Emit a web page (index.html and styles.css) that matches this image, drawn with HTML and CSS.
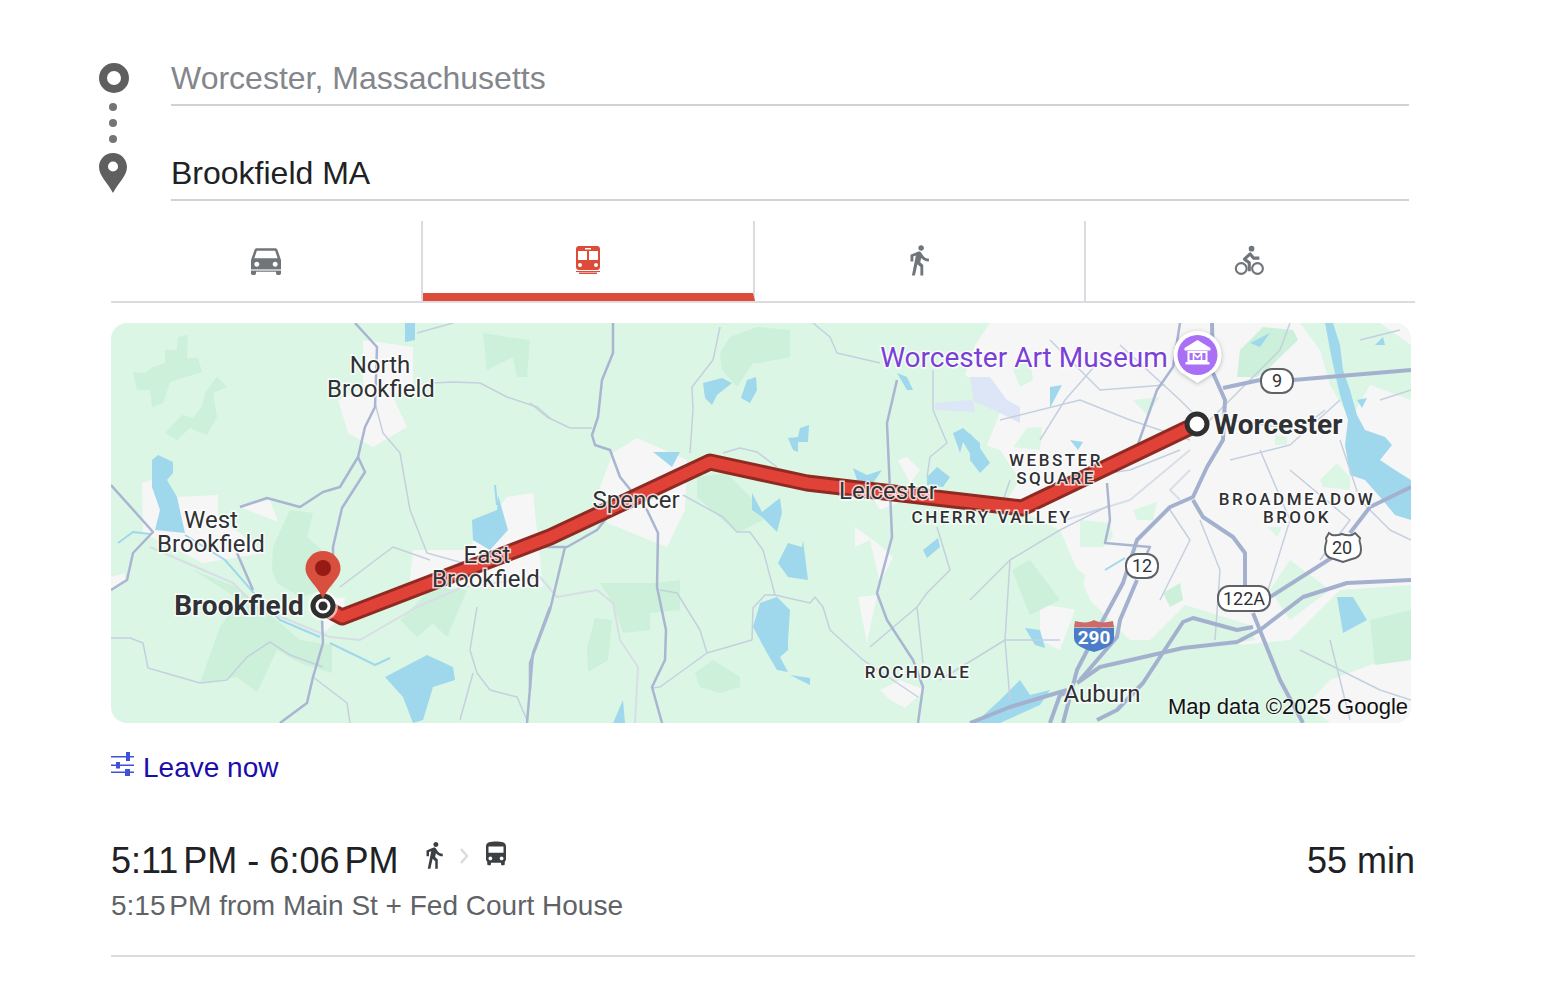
FILE: index.html
```html
<!DOCTYPE html>
<html lang="en">
<head>
	<meta charset="UTF-8" />
	<title>Directions</title>
	<link rel="stylesheet" href="styles.css">
</head>
<body>
	<div class="directions">
		<!-- Origin and destination -->
		<div class="endpoints">
			<div class="endpoint-icons">
				<svg class="icon-origin" viewBox="0 0 30 30"><circle cx="15" cy="15" r="11" fill="none" stroke="#5f5f5f" stroke-width="8"/></svg>
				<span class="hop-dot"></span>
				<span class="hop-dot"></span>
				<span class="hop-dot"></span>
				<svg class="icon-dest" viewBox="0 0 28 40"><path fill="#5f5f5f" d="M14 0C6.3 0 0 6.2 0 14c0 9 9 16 14 26 5-10 14-17 14-26C28 6.2 21.700 0 14 0z"/><circle cx="14" cy="13.500" r="5" fill="#fff"/></svg>
			</div>
			<div class="endpoint-fields">
				<div class="field field-from">Worcester, Massachusetts</div>
				<div class="field field-to">Brookfield MA</div>
			</div>
		</div>

		<!-- Travel modes -->
		<div class="modes">
			<div class="mode">
				<svg class="mode-icon mode-icon-car" viewBox="0 0 24 24"><path fill="#70757a" d="M18.920 6.010C18.720 5.420 18.160 5 17.500 5h-11c-.66 0-1.210.42-1.420 1.010L3 12v8c0 .55.45 1 1 1h1c.55 0 1-.45 1-1v-1h12v1c0 .55.45 1 1 1h1c.55 0 1-.45 1-1v-8l-2.080-5.990zM6.500 16c-.83 0-1.500-.67-1.500-1.500S5.670 13 6.500 13s1.500.67 1.500 1.500S7.330 16 6.500 16zm11 0c-.83 0-1.500-.67-1.500-1.500s.67-1.500 1.500-1.500 1.500.67 1.500 1.500-.67 1.500-1.500 1.500zM5 11l1.500-4.500h11L19 11H5z"/><path stroke="#fff" stroke-width=".7" d="M3 18h18"/></svg>
			</div>
			<div class="mode mode-active">
				<svg class="mode-icon-train" viewBox="0 0 24 29"><path fill="#dd4b39" fill-rule="evenodd" d="M3 0h18c1.700 0 3 1.300 3 3v18c0 1.700-1.300 3-3 3H3c-1.700 0-3-1.300-3-3V3c0-1.700 1.300-3 3-3zm6 2v1.500h6V2H9zM2 5v9h9V5H2zm11 0v9h9V5h-9zM4 17a2 2 0 1 0 0 4 2 2 0 0 0 0-4zm16 0a2 2 0 1 0 0 4 2 2 0 0 0 0-4z"/><path fill="#dd4b39" d="M0 25h24v1H0zM3 26.500h18v1.500H3z"/></svg>
			</div>
			<div class="mode">
				<svg class="mode-icon mode-icon-walk" viewBox="0 0 24 24"><path fill="#70757a" d="M13.500 5.500c1.100 0 2-.9 2-2s-.9-2-2-2-2 .9-2 2 .9 2 2 2zM9.800 8.900L7 23h2.100l1.800-8 2.100 2v6h2v-7.500l-2.100-2 .6-3C14.800 12 16.800 13 19 13v-2c-1.900 0-3.500-1-4.300-2.400l-1-1.600c-.4-.6-1-1-1.700-1-.3 0-.5.1-.8.1L6 8.300V13h2V9.600l1.800-.7"/></svg>
			</div>
			<div class="mode">
				<svg class="mode-icon mode-icon-bike" viewBox="0 0 24 24"><g fill="none" stroke="#70757a" stroke-width="1.500"><circle cx="6.500" cy="18" r="3.800"/><circle cx="18" cy="18" r="3.800"/></g><circle cx="13.800" cy="4" r="2" fill="#70757a"/><path fill="none" stroke="#70757a" stroke-width="2.200" stroke-linejoin="round" d="M12.200 20v-6l-3.400-2.600 4-3.700 2.500 3h4"/></svg>
			</div>
		</div>

		<!-- Map -->
		<svg class="map" viewBox="111 323 1300 400">
			<rect x="111" y="323" width="1300" height="400" fill="#dbf6e4"/>

			<!-- built up areas -->
			<g fill="#f6f6f7">
				<polygon points="363,340 413,347 413,387 393,397 407,427 373,447 348,433 338,400 363,387"/>
				<polygon points="142,483 160,477 175,497 218,495 218,520 240,533 263,553 203,563 183,553 143,533"/>
				<polygon points="240,507 270,500 278,522"/>
				<polygon points="413,550 467,550 507,497 533,493 543,587 433,587 410,580"/>
				<polygon points="327,597 345,598 343,617 323,633"/>
				<polygon points="111,577 125,573 125,583 111,590"/>
				<polygon points="637,438 687,460 685,510 667,547 607,523 600,487 613,453"/>
				<polygon points="855,527 877,543 893,557 880,583 870,540 855,547"/>
				<polygon points="858,597 877,595 867,643"/>
				<polygon points="898,460 907,457 920,470 910,483"/>
				<polygon points="868,490 905,500 880,510"/>
				<polygon points="880,690 900,680 925,690 905,708 890,700"/>
				<polygon points="990,323 1411,323 1411,650 1340,660 1260,650 1190,630 1170,640 1130,640 1090,600 1060,530 1000,500 985,450 1005,400 965,375 975,345"/>
				<polygon points="1040,600 1075,610 1060,650 1040,640"/>
				<polygon points="1290,690 1411,650 1411,723 1330,723"/>
			</g>

			<!-- green patches over the city -->
			<g fill="#dbf6e4">
				<polygon points="1300,323 1380,323 1411,345 1411,400 1370,385 1350,420 1330,385 1320,350"/>
				<polygon points="970,440 1000,450 1020,480 1000,510 970,500"/>
				<polygon points="1320,480 1337,463 1350,477 1350,490 1323,487"/>
				<polygon points="1012,367 1030,360 1033,380 1020,387"/>
				<polygon points="1013,447 1027,428 1042,427 1040,450"/>
				<polygon points="1133,400 1160,397 1147,415"/>
				<polygon points="1080,520 1110,523 1113,537 1103,547 1080,547"/>
				<polygon points="1133,510 1157,502 1153,520 1137,520"/>
				<polygon points="1275,435 1287,437 1287,445 1275,445"/>
				<polygon points="1268,527 1282,527 1277,537"/>
				<polygon points="1040,540 1085,575 1080,610 1045,605"/>
				<polygon points="1150,723 1180,660 1240,645 1290,640 1340,590 1411,585 1411,650 1330,680 1290,723"/>
				<polygon points="1150,640 1185,605 1250,625 1255,640 1160,655"/>
				<polygon points="1290,560 1330,590 1290,620 1270,590"/>
			</g>

			<!-- forest -->
			<g fill="#ccf0da">
				<polygon points="133,372 145,373 153,367 165,363 165,350 177,350 178,337 188,335 187,358 198,358 202,372 170,382 163,403 152,407 150,390 137,390"/>
				<polygon points="217,377 227,387 213,393 217,417 207,435 190,428 177,440 165,433 182,415 193,418 202,407 205,393"/>
				<polygon points="273,547 290,510 313,513 307,537 333,560 333,587 300,597 277,583 272,570"/>
				<polygon points="193,570 237,587 253,600 300,640 332,645 332,673 300,663 277,650 257,692 237,677 200,683 220,627 240,600"/>
				<polygon points="400,620 433,587 467,590 447,637 433,623 417,637"/>
				<polygon points="483,333 507,337 530,340 527,377 517,377 513,357 487,370"/>
				<polygon points="720,353 730,337 757,327 790,330 790,357 760,363 753,363 737,387 722,370"/>
				<polygon points="697,477 727,473 760,507 763,520 737,533 697,497"/>
				<polygon points="600,583 657,583 680,580 680,610 650,613 650,630 623,633 613,603"/>
				<polygon points="595,618 612,620 608,660 588,672 587,648"/>
				<polygon points="695,673 713,660 740,677 740,687 720,693 700,687"/>
				<polygon points="1240,350 1263,327 1293,330 1298,340 1270,367 1257,377 1237,377"/>
				<polygon points="1163,593 1180,583 1183,600 1170,607"/>
				<polygon points="1370,620 1411,610 1411,660 1375,665"/>
				<polygon points="1012,570 1030,560 1060,600 1030,615"/>
			</g>

			<!-- water -->
			<g fill="#9fd8ec">
				<polygon points="158,455 173,462 173,473 167,480 177,497 185,533 155,530 160,510 152,487 152,460"/>
				<polygon points="472,520 497,510 498,495 508,530 490,550 473,540"/>
				<polygon points="385,677 427,655 453,667 455,680 433,687 423,720 413,723 403,697"/>
				<polygon points="405,323 415,323 415,340 405,342"/>
				<polygon points="703,383 722,378 732,383 717,395 712,405 705,398"/>
				<polygon points="747,380 756,377 757,390 750,403 741,398"/>
				<polygon points="653,452 680,452 672,467"/>
				<polygon points="788,438 798,437 800,428 809,425 808,442 798,442 798,452 793,450"/>
				<polygon points="752,493 762,512 780,498 782,513 777,532 762,517 752,510"/>
				<polygon points="778,563 788,543 802,547 803,540 808,580 788,577"/>
				<polygon points="760,603 777,597 790,610 788,640 788,650 780,657 788,672 777,670 767,653 753,627"/>
				<polygon points="790,675 810,678 810,685"/>
				<polygon points="897,373 907,377 913,390 907,390"/>
				<polygon points="853,468 867,475 882,470 873,483 858,483"/>
				<polygon points="923,550 938,538 940,547 927,558"/>
				<polygon points="927,477 937,467 950,477 943,487 927,485"/>
				<polygon points="953,433 963,428 980,443 980,470 963,442 960,453"/>
				<polygon points="613,723 623,700 625,723"/>
				<polygon points="970,433 990,463 980,473 970,460"/>
				<polygon points="1050,387 1062,385 1050,408"/>
				<polygon points="1070,440 1083,442 1078,450"/>
				<polygon points="1250,343 1270,333 1260,347"/>
				<polygon points="1375,345 1383,337 1385,345"/>
				<polygon points="1357,400 1367,398 1362,408"/>
				<polygon points="1325,323 1333,323 1340,345 1343,370 1350,390 1357,415 1365,430 1385,437 1392,445 1380,460 1395,470 1411,480 1411,520 1395,515 1380,497 1365,480 1350,475 1345,445 1348,420 1340,395 1332,360"/>
				<polygon points="1337,597 1353,597 1367,620 1343,633"/>
				<polygon points="1000,700 1020,680 1030,695 1050,690 1040,705 1000,723 975,723"/>
				<polygon points="1025,628 1040,630 1045,648 1035,645"/>
			</g>
			<polygon fill="#dde6f6" points="970,377 990,377 1007,400 1020,407 1020,423 1000,413 970,400 935,403 935,410 975,412"/>

			<!-- rivers -->
			<g class="river">
				<polyline points="118,543 133,532 150,534"/>
				<polyline points="185,535 225,560 260,600 280,620 320,637"/>
				<polyline points="330,643 365,660 375,665 390,658"/>
				<polyline points="495,485 497,505"/>
				<polyline points="1105,570 1125,558"/>
			</g>

			<!-- rail and small roads -->
			<g class="rail">
				<polyline points="150,547 233,583 257,607 330,637 360,640 417,607 463,587 540,577 557,597 597,590 613,603 620,640 638,667 635,723"/>
				<polyline points="1190,450 1130,500 1065,520"/>
				<polyline points="1190,470 1170,490 1180,500"/>
			</g>
			<g class="road-minor">
				<polyline points="375,403 383,433 400,453 410,510 427,553 463,563"/>
				<polyline points="433,383 453,382 480,383 507,397 537,407 550,418"/>
				<polyline points="417,333 453,323"/>
				<polyline points="111,638 130,638 143,643 148,668 200,683 227,680 247,657 270,642 290,655 323,667"/>
				<polyline points="340,587 393,547 430,560"/>
				<polyline points="477,607 470,650 477,673 490,690 517,697 527,720"/>
				<polyline points="460,720 473,673"/>
				<polyline points="313,677 347,703 350,723"/>
				<polyline points="530,403 547,417 570,428 592,428"/>
				<polyline points="720,327 713,360 692,387 693,410 690,453"/>
				<polyline points="813,323 830,337 837,353 880,363"/>
				<polyline points="723,453 740,448 757,452 777,467"/>
				<polyline points="683,495 723,517 737,532 750,532 763,550 775,595 810,603 815,597 823,607 830,630 863,660 918,697"/>
				<polyline points="775,595 765,595 753,608 752,640 707,653 660,687 652,688"/>
				<polyline points="660,590 677,593 700,630 707,653"/>
				<polyline points="933,370 933,410 947,443 930,457 927,477"/>
				<polyline points="937,527 950,570 927,593 917,607 870,647"/>
				<polyline points="917,607 923,663"/>
				<polyline points="1050,340 1100,390 1165,385"/>
				<polyline points="1000,420 1080,400 1130,420 1190,440"/>
				<polyline points="1230,460 1290,445 1340,400"/>
				<polyline points="1260,450 1290,520 1265,600"/>
				<polyline points="1200,430 1280,350 1290,323"/>
				<polyline points="970,600 1010,560 1060,530 1110,505"/>
				<polyline points="1010,560 1005,640 1010,700"/>
				<polyline points="940,680 1005,640 1060,640"/>
				<polyline points="1340,440 1360,500 1390,530 1411,540"/>
				<polyline points="1300,650 1380,690 1411,700"/>
				<polyline points="1200,520 1220,570 1215,640"/>
				<polyline points="1330,640 1350,720"/>
				<polyline points="1060,480 1130,470 1180,450"/>
				<polyline points="1230,420 1300,430 1325,410"/>
				<polyline points="1120,345 1180,400 1200,420"/>
				<polyline points="1040,440 1065,400 1100,360"/>
				<polyline points="1290,470 1350,520 1320,560"/>
				<polyline points="1160,600 1190,540 1170,510"/>
				<polyline points="1000,510 1010,480"/>
				<polyline points="1360,340 1400,330"/>
				<polyline points="1380,400 1411,390"/>
			</g>

			<!-- main roads -->
			<g class="road">
				<polyline points="355,323 377,347 375,407 365,427 358,457 340,487 323,492 300,507 267,498 240,507"/>
				<polyline points="358,457 365,472 342,508 333,547 333,567"/>
				<polyline points="111,485 153,532 133,553 127,580 111,590"/>
				<polyline points="237,553 253,590"/>
				<polyline points="322,620 323,643 313,677 307,703 280,723"/>
				<polyline points="550,607 533,653 527,723"/>
				<polyline points="613,323 613,353 602,380 598,417 592,435 595,445 610,450 620,477 647,510 658,533 657,587 666,630 665,660 652,687 662,723"/>
				<polyline points="613,510 597,530 567,547 540,547"/>
				<polyline points="565,547 550,610 530,663 530,690"/>
				<polyline points="897,380 887,423 892,537 877,593 887,620 913,660 923,687 918,723"/>
				<polyline points="1180,323 1173,367 1157,390 1137,447"/>
				<polyline points="1107,483 1110,520 1105,543 1150,547 1147,553"/>
			</g>
			<g class="road road-wide">
				<polyline points="1212,323 1213,373 1225,400 1223,440 1207,467 1193,497 1170,507 1137,540 1123,583 1103,620 1077,670 1063,723"/>
				<polyline points="1193,500 1203,517 1233,537 1245,553 1245,587"/>
				<polyline points="1223,388 1260,380"/>
				<polyline points="1293,380 1411,370"/>
				<polyline points="1077,683 1100,667 1183,648 1237,642 1260,630 1303,597 1347,583 1411,580"/>
				<polyline points="1270,597 1333,557"/>
				<polyline points="1350,533 1370,507 1411,487"/>
				<polyline points="1253,613 1280,680 1303,723"/>
				<polyline points="1253,627 1237,630 1193,618 1183,622 1143,683 1117,710 1097,720"/>
				<polyline points="970,723 1010,707 1067,690"/>
				<polyline points="1137,580 1120,620 1117,637 1080,680"/>
				<polyline points="1050,723 1060,695 1075,690"/>
			</g>

			<!-- route -->
			<polyline class="route-outer" points="323,607 342,617 550,537 710,462 807,483 1022,508 1197,424"/>
			<polyline class="route-inner" points="323,607 342,617 550,537 710,462 807,483 1022,508 1197,424"/>

			<!-- place labels -->
			<text class="label" y="373"><tspan x="380">North</tspan><tspan x="381" dy="24">Brookfield</tspan></text>
			<text class="label" y="528"><tspan x="211">West</tspan><tspan x="211" dy="24">Brookfield</tspan></text>
			<text class="label" y="563"><tspan x="487">East</tspan><tspan x="486" dy="24">Brookfield</tspan></text>
			<text class="label" x="636" y="508">Spencer</text>
			<text class="label" x="888" y="499">Leicester</text>
			<text class="label" x="1102" y="702">Auburn</text>
			<text class="label label-hood" x="992" y="523">CHERRY VALLEY</text>
			<text class="label label-hood" x="918" y="678">ROCHDALE</text>
			<text class="label label-hood" y="466"><tspan x="1056">WEBSTER</tspan><tspan x="1056" dy="18">SQUARE</tspan></text>
			<text class="label label-hood" y="505"><tspan x="1297">BROADMEADOW</tspan><tspan x="1297" dy="18">BROOK</tspan></text>
			<text class="label label-city" x="239" y="615">Brookfield</text>
			<text class="label label-city" x="1278" y="434">Worcester</text>
			<text class="label label-poi" x="1024" y="367">Worcester Art Museum</text>

			<!-- museum pin -->
			<path class="pin-halo" d="M1197.500 331a24 24 0 0 1 17 41l-17 11-17-11a24 24 0 0 1 17-41z"/>
			<circle cx="1197.500" cy="355" r="20" fill="#a970f5"/>
			<path fill="#fff" d="M1197.500 340l-13 8v2.500h26V348zM1185.500 362h24v2.500h-24z"/>
			<rect x="1188.500" y="352" width="18" height="9" fill="none" stroke="#fff" stroke-width="2"/>
			<path fill="none" stroke="#fff" stroke-width="1.600" d="M1193.500 360v-6.500l4 4 4-4v6.500"/>

			<!-- route shields -->
			<rect class="shield" x="1261" y="369" width="32" height="24" rx="11"/>
			<text class="shield-text" x="1277" y="387">9</text>
			<rect class="shield" x="1126" y="554" width="32" height="24" rx="11"/>
			<text class="shield-text" x="1142" y="572">12</text>
			<rect class="shield" x="1218" y="586" width="52" height="25" rx="11"/>
			<text class="shield-text" x="1244" y="605">122A</text>
			<path class="shield" d="M1329 533l3 2q5 1 10-1q5 2 10 1l3-2 5 5q-1 3 0 5c1 3 1 5 1 7 0 5-4 8-9 9l-9 3-9-3c-6-1-9-4-9-9 0-2 0-4 1-7q1-2 0-5z"/>
			<text class="shield-text" x="1342" y="554">20</text>

			<!-- interstate shield -->
			<path fill="#cf6a6a" d="M1075 621c8 2 14 2 19-1 5 3 11 3 19 1l1 6.500h-40z"/>
			<path fill="#4b7cc8" d="M1074 628h40v10c0 7-9 11-20 14-11-3-20-7-20-14z"/>
			<text class="shield-inter" x="1094" y="644">290</text>

			<!-- destination and origin markers -->
			<circle cx="323" cy="606" r="15" fill="#fff" opacity=".6"/>
			<circle cx="323" cy="606" r="10" fill="#fff" stroke="#2f2f2f" stroke-width="5"/>
			<circle cx="323" cy="606" r="4.500" fill="#2f2f2f"/>
			<path fill="#d94f3d" d="M323 551a17.500 17.500 0 0 1 17.500 17.500c0 10-11 16-17.500 30-6.500-14-17.500-20-17.500-30A17.500 17.500 0 0 1 323 551z"/>
			<circle cx="323" cy="568" r="8" fill="#951b14"/>
			<circle cx="1197" cy="424" r="10" fill="#fff" stroke="#2f2f2f" stroke-width="5"/>

			<text class="map-credit" x="1408" y="714">Map data ©2025 Google</text>
		</svg>

		<!-- Leave now -->
		<div class="depart">
			<svg class="depart-icon" viewBox="0 0 24 24"><path fill="#3f51d8" d="M0 4h23v1.500H0zM0 12.500h23V14H0zM0 19.500h23V21H0z"/><path fill="#3f51d8" d="M15 0h4v9h-4zM5 10h4v6.500H5zM14 17h5v7h-5z"/></svg>
			<span>Leave now</span>
		</div>

		<!-- Result -->
		<div class="trip">
			<div class="trip-top">
				<div class="trip-times">
					<span class="trip-range"><span class="clock">5:11 PM</span> - <span class="clock">6:06 PM</span></span>
					<svg class="trip-walk" viewBox="0 0 24 24"><path fill="#3c4043" d="M13.500 5.500c1.100 0 2-.9 2-2s-.9-2-2-2-2 .9-2 2 .9 2 2 2zM9.800 8.900L7 23h2.100l1.800-8 2.100 2v6h2v-7.500l-2.100-2 .6-3C14.800 12 16.800 13 19 13v-2c-1.900 0-3.500-1-4.300-2.400l-1-1.600c-.4-.6-1-1-1.700-1-.3 0-.5.1-.8.1L6 8.300V13h2V9.600l1.800-.7"/></svg>
					<svg class="trip-chevron" viewBox="0 0 10 16"><path fill="none" stroke="#dadce0" stroke-width="2.500" d="M2 1l6 7-6 7"/></svg>
					<svg class="trip-bus" viewBox="0 0 24 24"><path fill="#3c4043" d="M4 16c0 .88.39 1.670 1 2.220V20c0 .55.45 1 1 1h1c.55 0 1-.45 1-1v-1h8v1c0 .55.45 1 1 1h1c.55 0 1-.45 1-1v-1.780c.61-.55 1-1.340 1-2.220V6c0-3.500-3.580-4-8-4s-8 .5-8 4v10zm3.500 1c-.83 0-1.500-.67-1.500-1.500S6.670 14 7.500 14s1.500.67 1.500 1.500S8.330 17 7.500 17zm9 0c-.83 0-1.500-.67-1.500-1.500s.67-1.500 1.500-1.500 1.500.67 1.500 1.500-.67 1.500-1.500 1.500zm1.500-6H6V6h12v5z"/></svg>
				</div>
				<span class="trip-duration">55 min</span>
			</div>
			<div class="trip-sub"><span class="clock">5:15 PM</span> from Main St + Fed Court House</div>
		</div>
	</div>
</body>
</html>
```
FILE: styles.css
```css
body {
	margin: 0;
	background: #fff;
	font-family: "Liberation Sans", Arial, sans-serif;
	color: #202124;
}
.directions {
	width: 1304px;
	margin-left: 111px;
}

/* Origin and destination */
.endpoints {
	display: flex;
	height: 201px;
}
.endpoint-icons {
	width: 60px;
	margin-left: -12px;
	padding-top: 63px;
	box-sizing: border-box;
	display: flex;
	flex-direction: column;
	align-items: flex-start;
}
.icon-origin {
	width: 30px;
	height: 30px;
	margin-bottom: 10px;
}
.hop-dot {
	width: 8px;
	height: 8px;
	border-radius: 50%;
	background: #70757a;
	margin-left: 10px;
	margin-bottom: 8px;
}
.icon-dest {
	width: 28px;
	height: 40px;
	margin-top: 2px;
}
.endpoint-fields {
	flex: none;
	width: 1238px;
	margin-left: 12px;
	padding-top: 11px;
}
.field {
	height: 95px;
	box-sizing: border-box;
	border-bottom: 2px solid #d2d2d4;
	font-size: 32px;
	display: flex;
	align-items: flex-end;
	padding-bottom: 7px;
}
.field-from {
	color: #83868a;
}

/* Travel modes */
.modes {
	display: grid;
	grid-template-columns: 312px 332px 331px 329px;
	height: 82px;
	margin-top: 20px;
	border-bottom: 2px solid #dadce0;
	box-sizing: border-box;
}
.mode {
	display: flex;
	align-items: center;
	justify-content: center;
	border-right: 2px solid #dadce0;
	padding-bottom: 2px;
	box-sizing: border-box;
}
.mode:last-child {
	border-right: none;
}
.mode-active {
	border-bottom: 8px solid #dd4b39;
	padding-bottom: 0;
	padding-top: 6px;
}
.mode-icon {
	width: 34px;
	height: 34px;
}
.mode-icon-car {
	width: 40px;
	height: 40px;
}
.mode-icon-train {
	width: 24px;
	height: 29px;
}
.mode-icon-walk {
	margin-left: -2px;
}
.mode-icon-bike {
	margin-left: -3px;
}

/* Map */
.map {
	display: block;
	width: 1300px;
	height: 400px;
	margin-top: 20px;
	border-radius: 16px;
}
.road,
.road-minor,
.rail,
.river,
.route-outer,
.route-inner {
	fill: none;
	stroke-linejoin: round;
}
.road {
	stroke: #a9b5d1;
	stroke-width: 2.5;
}
.road-wide {
	stroke: #a3b1cf;
	stroke-width: 4;
}
.road-minor {
	stroke: #c5d0df;
	stroke-width: 1.5;
}
.rail {
	stroke: #d9dee6;
	stroke-width: 2;
}
.river {
	stroke: #9fd8ec;
	stroke-width: 2;
}
.route-outer {
	stroke: #8f2a22;
	stroke-width: 17;
}
.route-inner {
	stroke: #e04238;
	stroke-width: 11;
}
.label {
	font-family: Roboto, sans-serif;
	font-size: 24px;
	fill: #303134;
	text-anchor: middle;
	stroke: #fff;
	stroke-opacity: .8;
	stroke-width: 3px;
	paint-order: stroke;
}
.label-hood {
	font-size: 17px;
	font-weight: 500;
	letter-spacing: 2.5px;
}
.label-city {
	font-size: 28px;
	font-weight: 700;
}
.label-poi {
	font-size: 28px;
	fill: #7b3fd8;
}
.pin-halo {
	fill: #fff;
	filter: drop-shadow(0 1px 2px rgba(0, 0, 0, 0.25));
}
.shield {
	fill: #fff;
	stroke: #5f6368;
	stroke-width: 2;
}
.shield-text {
	font-family: Roboto, sans-serif;
	font-size: 18px;
	fill: #303134;
	text-anchor: middle;
}
.shield-inter {
	font-family: Roboto, sans-serif;
	font-size: 19px;
	font-weight: 700;
	fill: #fff;
	text-anchor: middle;
}
.map-credit {
	font-family: "Liberation Sans", Arial, sans-serif;
	font-size: 22px;
	fill: #111;
	text-anchor: end;
	stroke: #fff;
	stroke-opacity: .5;
	stroke-width: 2px;
	paint-order: stroke;
}

/* Leave now */
.depart {
	display: flex;
	align-items: center;
	gap: 8px;
	margin-top: 29px;
	height: 32px;
	font-size: 28px;
	color: #1a0dab;
}
.depart-icon {
	width: 24px;
	height: 24px;
	margin-top: -8px;
}

/* Result */
.trip {
	margin-top: 54px;
	height: 119px;
	box-sizing: border-box;
	border-bottom: 2px solid #dadce0;
}
.trip-top {
	display: flex;
	justify-content: space-between;
	align-items: center;
	height: 46px;
}
.trip-times {
	display: flex;
	align-items: center;
}
.trip-range,
.trip-duration {
	font-size: 36px;
	color: #202124;
}
.clock {
	word-spacing: -.14em;
}
.trip-walk {
	width: 30px;
	height: 30px;
	margin-left: 21px;
	margin-top: -12px;
}
.trip-chevron {
	width: 10px;
	height: 16px;
	margin-left: 10px;
	margin-top: -10px;
}
.trip-bus {
	width: 30px;
	height: 30px;
	margin-left: 12px;
	margin-top: -14px;
}
.trip-sub {
	margin-top: 6px;
	font-size: 28px;
	color: #5f6368;
}
```
